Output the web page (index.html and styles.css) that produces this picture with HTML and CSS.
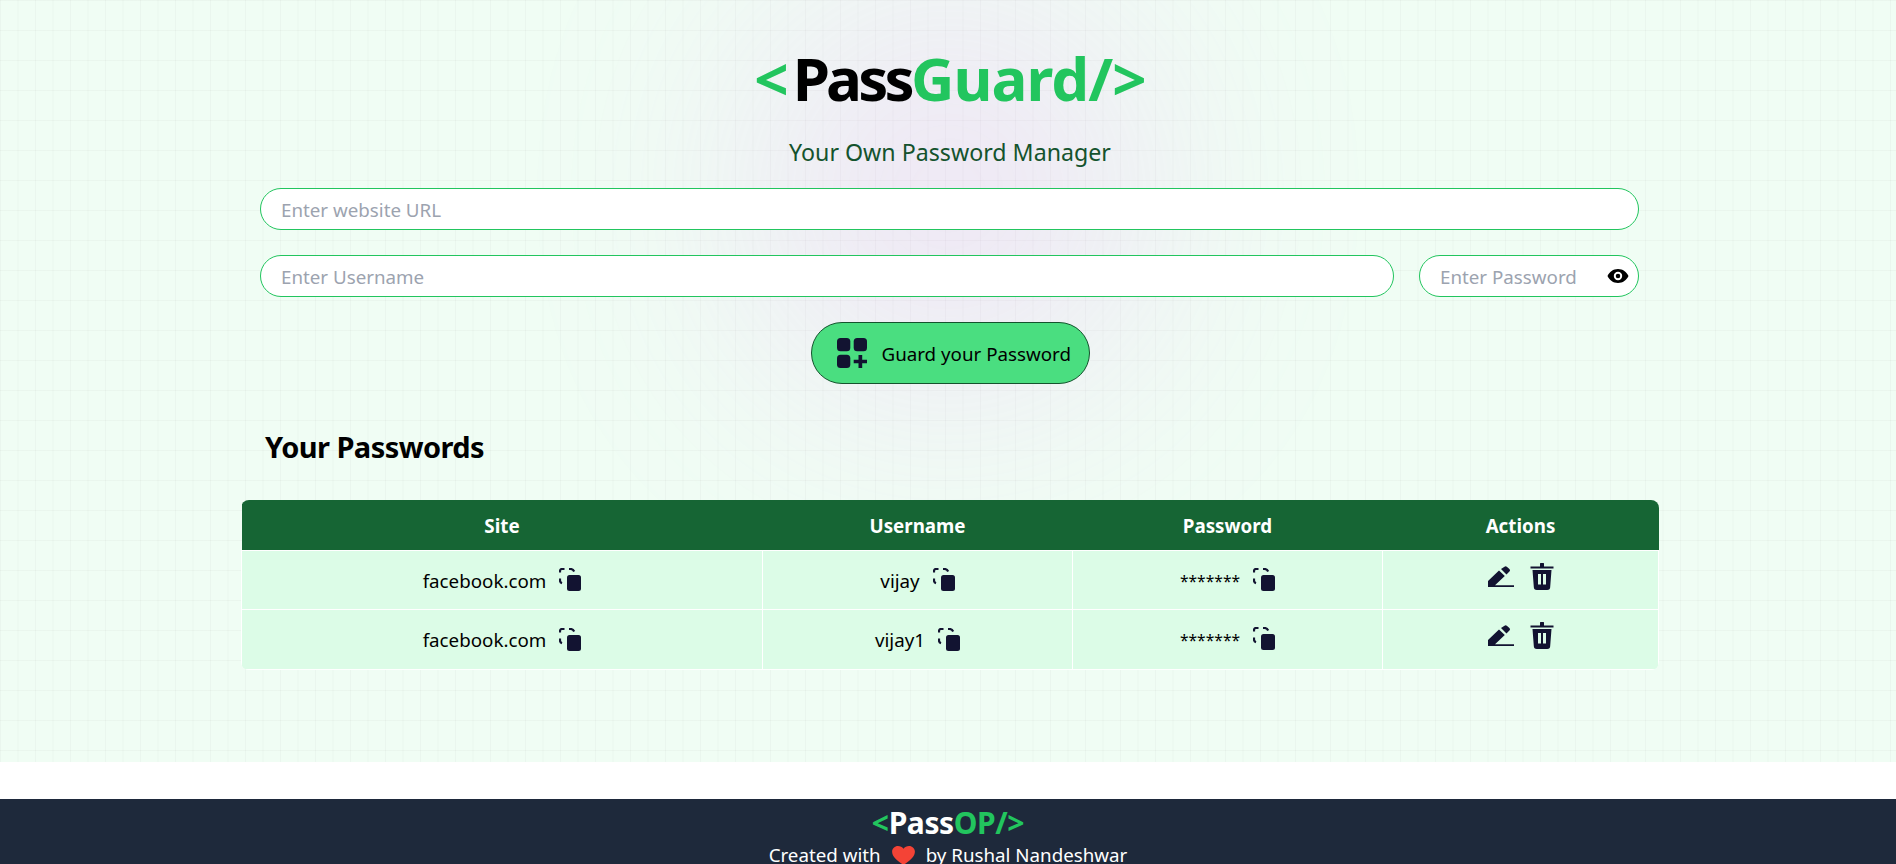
FILE: index.html
```html
<!DOCTYPE html>
<html>
<head>
    <title>PassGuard</title>
    <link rel="stylesheet" href="styles.css">
</head>
<body>
    <svg class="icon-defs" width="0" height="0">
        <symbol id="copy" viewBox="0 0 22 23">
            <path d="M1 4.500V3A2 2 0 0 1 3 1H5.500M1 10.500V12.500Q1 14.500 3 15.200M10 1H11.500Q14 1 15.200 3.500" fill="none" stroke="currentColor" stroke-width="2.200"/>
            <rect x="8" y="7" width="14" height="16" rx="2.500" fill="currentColor"/>
        </symbol>
        <symbol id="edit" viewBox="0 0 26 21">
            <path d="M0 21V15L11 4.500L16.800 10L7 19.300H26V21Z M13 3L16.500.7A1.800 1.800 0 0 1 18.800.7L21.400 3A1.800 1.800 0 0 1 21.400 5.500L18.500 8.500Z" fill="currentColor"/>
        </symbol>
        <symbol id="trash" viewBox="0 0 24 27">
            <path d="M.5 3.400H10V1.200A1.200 1.200 0 0 1 14 1.200V3.400H23.500V5.400H.5Z" fill="currentColor"/>
            <path fill-rule="evenodd" d="M2.500 7H21.500L20.200 24A3 3 0 0 1 17.200 27H6.800A3 3 0 0 1 3.800 24ZM8 11V21.500H11V11ZM13 11V21.500H16V11Z" fill="currentColor"/>
        </symbol>
    </svg>

    <div class="bg-area">
        <div class="glow"></div>
        <div class="container">
            <h1 class="logo"><span class="green lt">&lt;</span><span class="pass">Pass</span><span class="green">Guard/&gt;</span></h1>
            <p class="tagline">Your Own Password Manager</p>

            <input class="field" type="text" placeholder="Enter website URL">
            <div class="field-row">
                <input class="field" type="text" placeholder="Enter Username">
                <div class="password-wrap">
                    <input class="field" type="password" placeholder="Enter Password">
                    <svg class="eye" viewBox="0 0 24 16">
                        <path fill-rule="evenodd" d="M12 0C6.500 0 2.200 3.200 0 8C2.200 12.800 6.500 16 12 16S21.800 12.800 24 8C21.800 3.200 17.500 0 12 0ZM12 3.200A4.800 4.800 0 1 1 12 12.800A4.800 4.800 0 0 1 12 3.200ZM12 5.400A2.600 2.600 0 1 0 12 10.600A2.600 2.600 0 0 0 12 5.400Z"/>
                    </svg>
                </div>
            </div>

            <button class="save-btn">
                <svg class="add-icon" viewBox="0 0 30 30">
                    <rect x="0" y="0" width="13.300" height="13.300" rx="3.500"/>
                    <rect x="16.700" y="0" width="13.300" height="13.300" rx="3.500"/>
                    <rect x="0" y="16.700" width="13.300" height="13.300" rx="3.500"/>
                    <path d="M21.500 17H25.200V21.700H30V25.300H25.200V30H21.500V25.300H16.700V21.700H21.500Z"/>
                </svg>
                <span class="btn-label">Guard your Password</span>
            </button>

            <h2 class="list-title">Your Passwords</h2>

            <table class="pass-table">
                <colgroup>
                    <col class="col-site">
                    <col class="col-mid">
                    <col class="col-mid">
                    <col>
                </colgroup>
                <thead>
                    <tr>
                        <th>Site</th>
                        <th>Username</th>
                        <th>Password</th>
                        <th>Actions</th>
                    </tr>
                </thead>
                <tbody>
                    <tr>
                        <td><span class="cell">facebook.com <svg class="copy"><use href="#copy"/></svg></span></td>
                        <td><span class="cell">vijay <svg class="copy"><use href="#copy"/></svg></span></td>
                        <td><span class="cell"><span class="stars">*******</span> <svg class="copy"><use href="#copy"/></svg></span></td>
                        <td class="actions"><svg class="edit"><use href="#edit"/></svg><svg class="trash"><use href="#trash"/></svg></td>
                    </tr>
                    <tr>
                        <td><span class="cell">facebook.com <svg class="copy"><use href="#copy"/></svg></span></td>
                        <td><span class="cell">vijay1 <svg class="copy"><use href="#copy"/></svg></span></td>
                        <td><span class="cell"><span class="stars">*******</span> <svg class="copy"><use href="#copy"/></svg></span></td>
                        <td class="actions"><svg class="edit"><use href="#edit"/></svg><svg class="trash"><use href="#trash"/></svg></td>
                    </tr>
                </tbody>
            </table>
        </div>
    </div>

    <footer class="footer">
        <div class="footer-logo"><span class="green2">&lt;</span>Pass<span class="green2">OP/&gt;</span></div>
        <div class="footer-text">Created with
            <svg class="heart" viewBox="0 0 24 20"><path d="M12 20C5 15 0 11 0 6C0 2.600 2.800 0 6.200 0C8.500 0 10.700 1 12 2.800C13.300 1 15.500 0 17.800 0C21.200 0 24 2.600 24 6C24 11 19 15 12 20Z"/></svg>
            by Rushal Nandeshwar</div>
    </footer>
</body>
</html>
```

FILE: styles.css
```css
* { box-sizing: border-box; }
html, body { margin: 0; padding: 0; height: 100%; overflow: hidden; }
body { font-family: "Noto Sans", "Open Sans", sans-serif; background: #fff; color: #000; }
.icon-defs { position: absolute; }

.bg-area {
    position: relative;
    height: 762px;
    overflow: hidden;
    background-color: #f0fdf4;
    background-image:
        linear-gradient(to right, rgba(79,79,79,0.04) 1px, transparent 1px),
        linear-gradient(to bottom, rgba(79,79,79,0.04) 1px, transparent 1px);
    background-size: 17.5px 30px;
}
.glow {
    position: absolute;
    top: 0;
    left: 0;
    right: 0;
    margin: auto;
    width: 388px;
    height: 388px;
    border-radius: 50%;
    background: #e879f9;
    opacity: 0.2;
    filter: blur(125px);
}
.container {
    position: relative;
    width: 1420px;
    margin-left: 240px;
    padding-top: 41px;
    display: flex;
    flex-direction: column;
    align-items: center;
}

.logo { margin: 0; font-size: 60px; line-height: 75px; font-weight: 700; letter-spacing: -0.900px; white-space: nowrap; }
.lt { margin-right: 5px; }
.pass { letter-spacing: -3.800px; }
.green { color: #22c55e; }
.green2 { color: #22c55e; }
.tagline { margin: 19px 0 0; font-size: 23.200px; line-height: 35px; color: #14532d; }

.field {
    display: block;
    align-self: flex-start;
    width: 1379px;
    height: 42px;
    margin: 18px 0 0 20px;
    padding: 0 20px;
    border: 1px solid #22c55e;
    border-radius: 21px;
    background: #fff;
    font: inherit;
    font-size: 18.750px;
    outline: none;
}
.field::placeholder { color: #9ca3af; }
.field-row { display: flex; gap: 25px; align-self: flex-start; width: 1379px; margin: 25px 0 0 20px; }
.field-row .field { margin: 0; width: 1134px; }
.password-wrap { position: relative; width: 220px; }
.password-wrap .field { width: 100%; }
.eye { position: absolute; right: 10px; top: 14px; width: 22px; height: 14px; }

.save-btn {
    display: flex;
    align-items: center;
    gap: 15px;
    width: 279px;
    height: 62px;
    margin-top: 25px;
    padding: 0 25px;
    border: 1px solid #14532d;
    border-radius: 31px;
    background: #4ade80;
    color: #000;
    font: inherit;
    font-size: 18.750px;
}
.btn-label { white-space: nowrap; }
.add-icon { width: 30px; height: 30px; fill: #121331; flex: none; }

.list-title {
    align-self: flex-start;
    margin: 43px 0 0 25px;
    font-size: 29px;
    line-height: 40px;
    font-weight: 700;
    letter-spacing: -0.560px;
}

.pass-table {
    width: 1418px;
    margin-top: 33px;
    border-collapse: collapse;
    border-radius: 8px;
    overflow: hidden;
    table-layout: fixed;
    font-size: 18.750px;
}
.col-site { width: 521px; }
.col-mid { width: 310px; }
.pass-table th {
    height: 50px;
    padding: 2px 0 0;
    background: #166534;
    color: #fff;
    font-weight: 700;
}
.pass-table td {
    height: 59.500px;
    padding: 0;
    background: #dcfce7;
    border: 1px solid #fff;
    text-align: center;
    vertical-align: top;
}
.cell { display: inline-flex; align-items: center; gap: 13px; margin-top: 17px; }
.stars { font-size: 15.600px; margin-top: 2px; }
.copy { width: 22px; height: 23px; color: #121331; margin-top: -1px; }
.actions { padding-top: 12px !important; }
.edit { width: 26px; height: 21px; color: #121331; margin: 3px 16px 0 0; vertical-align: top; }
.trash { width: 24px; height: 27px; color: #121331; vertical-align: top; }

.footer {
    margin-top: 37px;
    height: 65px;
    background: #1e293b;
    color: #fff;
    text-align: center;
}
.footer-logo { font-size: 30px; line-height: 36px; font-weight: 700; padding-top: 6px; height: 42px; letter-spacing: -0.400px; }
.footer-text { display: flex; justify-content: center; align-items: center; gap: 11px; font-size: 18.750px; line-height: 28px; }
.heart { width: 23px; height: 19px; fill: #f44336; }
```
